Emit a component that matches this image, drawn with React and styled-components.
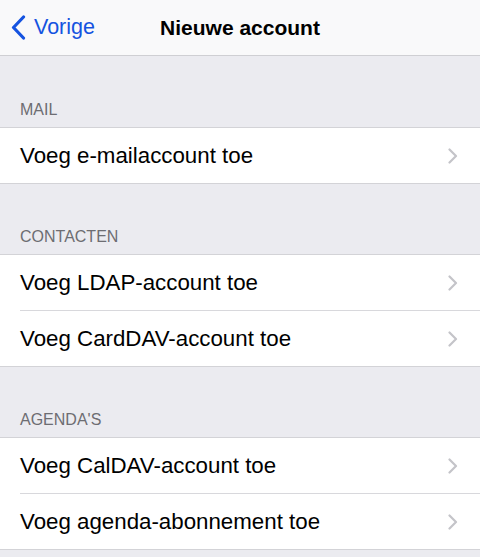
import React from "react";
import styled, { createGlobalStyle } from "styled-components";

const Global = createGlobalStyle`
  html, body { margin: 0; padding: 0; background: #ebebf0; }
  body { font-family: "Liberation Sans", Arial, sans-serif; -webkit-font-smoothing: antialiased; }
`;

const Page = styled.div`
  width: 480px;
  min-height: 557px;
  background: #ebebf0;
  display: flex;
  flex-direction: column;
`;

const NavBar = styled.header`
  height: 55px;
  background: #f9f9fa;
  border-bottom: 1px solid #cfcfd3;
  display: grid;
  grid-template-columns: 1fr auto 1fr;
  align-items: center;
`;

const BackButton = styled.div`
  display: flex;
  align-items: center;
  gap: 8px;
  padding-left: 11px;
  color: #1553e0;
  font-size: 21.5px;
`;

const Title = styled.div`
  font-size: 21px;
  font-weight: bold;
  color: #000;
`;

const SectionHeader = styled.div`
  height: ${(p) => p.$h}px;
  display: flex;
  align-items: flex-end;
  padding: 0 20px 8px;
  box-sizing: border-box;
  font-size: 16px;
  line-height: 18px;
  color: #6d6d72;
  text-transform: uppercase;
`;

const Group = styled.div`
  background: #fff;
  border-top: 1px solid #d3d3d7;
  border-bottom: 1px solid #d3d3d7;
`;

const Row = styled.div`
  height: 55px;
  display: flex;
  align-items: center;
  justify-content: space-between;
  padding: 1px 22px 0 20px;
  box-sizing: border-box;
  font-size: 22.3px;
  color: #000;
  & + & {
    border-top: 1px solid #d8d8dc;
    height: 56px;
    margin-left: 20px;
    padding-left: 0;
  }
`;

const Chevron = () => (
  <svg width="10" height="16" viewBox="0 0 10 16">
    <path d="M1.5 1.5 L8 8 L1.5 14.5" fill="none" stroke="#c4c4c9" strokeWidth="2.2" strokeLinecap="round" strokeLinejoin="round" />
  </svg>
);

const BackChevron = () => (
  <svg width="15" height="25" viewBox="0 0 15 25">
    <path d="M12.5 2 L2.5 12.5 L12.5 23" fill="none" stroke="#1553e0" strokeWidth="3.2" strokeLinecap="round" strokeLinejoin="round" />
  </svg>
);

const sections = [
  { title: "Mail", h: 71, rows: ["Voeg e-mailaccount toe"] },
  { title: "Contacten", h: 70, rows: ["Voeg LDAP-account toe", "Voeg CardDAV-account toe"] },
  { title: "Agenda's", h: 70, rows: ["Voeg CalDAV-account toe", "Voeg agenda-abonnement toe"] },
];

export default function App() {
  return (
    <Page>
      <Global />
      <NavBar>
        <BackButton>
          <BackChevron />
          <span>Vorige</span>
        </BackButton>
        <Title>Nieuwe account</Title>
        <div />
      </NavBar>
      {sections.map((s) => (
        <React.Fragment key={s.title}>
          <SectionHeader $h={s.h}>{s.title}</SectionHeader>
          <Group>
            {s.rows.map((r) => (
              <Row key={r}>
                <span>{r}</span>
                <Chevron />
              </Row>
            ))}
          </Group>
        </React.Fragment>
      ))}
    </Page>
  );
}
